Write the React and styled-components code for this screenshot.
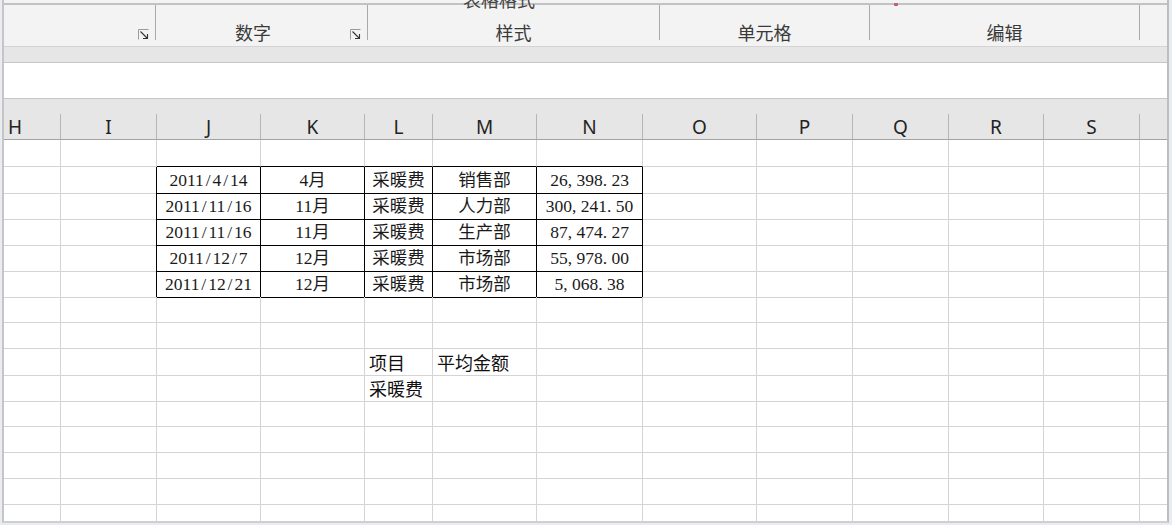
import React from "react";
import styled, { createGlobalStyle } from "styled-components";

const GlobalStyle = createGlobalStyle`
  html, body {
    margin: 0;
    padding: 0;
    background: #e9edf1;
  }
  * {
    box-sizing: border-box;
  }
`;

const COLS = "57px 96px 104px 104px 68px 104px 106px 114px 96px 96px 95px 96px 1fr";

const Page = styled.div`
  width: 1172px;
  height: 525px;
  overflow: hidden;
  background: #e9edf1;
`;

const Frame = styled.div`
  margin-left: 2px;
  width: 1167px;
  height: 523px;
  border-left: 2px solid #c6c6c6;
  border-right: 2px solid #bdbdbd;
  border-bottom: 2px solid #cfcfcf;
  background: #f3f3f3;
  padding-top: 3px;
  display: flex;
  flex-direction: column;
  overflow: hidden;
`;

const Ribbon = styled.div`
  height: 43px;
  border-top: 2px solid #c2c2c2;
  background: #f3f3f3;
  display: flex;
  position: relative;
`;

const Group = styled.div`
  position: relative;
  width: ${(p) => p.$w}px;
  flex: ${(p) => (p.$w ? "none" : "1")};
  height: 35px;
  padding-top: 17px;
  display: flex;
  justify-content: flex-end;
  align-items: flex-start;
  border-right: ${(p) => (p.$last ? "none" : "1px solid #a9a9a9")};
`;

const GroupLabel = styled.div`
  flex: 1;
  text-align: center;
  font-family: "Noto Sans CJK SC", sans-serif;
  font-size: 18px;
  line-height: 20px;
  color: #3a3a3a;
`;

const Launcher = styled.svg`
  width: 11px;
  height: 11px;
  margin: 7px 6px 0 0;
  flex: none;
`;

const ClippedTitle = styled.div`
  position: absolute;
  top: -16px;
  left: 95px;
  font-family: "Noto Sans CJK SC", sans-serif;
  font-size: 18px;
  line-height: 20px;
  color: #444;
`;

const Mark = styled.div`
  position: absolute;
  top: -2px;
  left: 24px;
  width: 4px;
  height: 3px;
  border-radius: 1px;
  background: #c35a78;
`;

const Band = styled.div`
  height: 17px;
  background: #e6e6e6;
  border-top: 1px solid #d4d4d4;
  border-bottom: 1px solid #c6c6c6;
`;

const FormulaArea = styled.div`
  height: 36px;
  background: #ffffff;
  border-bottom: 1px solid #c6c6c6;
`;

const HeaderRow = styled.div`
  height: 41px;
  padding-top: 15px;
  background: #e6e6e6;
  border-bottom: 1px solid #a3a3a3;
  display: grid;
  grid-template-columns: ${COLS};
`;

const HeaderCell = styled.div`
  height: 25px;
  border-right: ${(p) => (p.$last ? "none" : "1px solid #b5b5b5")};
  font-family: "Noto Sans", "Open Sans", sans-serif;
  font-size: 19px;
  line-height: 27px;
  color: #222;
  text-align: ${(p) => (p.$left ? "left" : "center")};
  padding-left: ${(p) => (p.$left ? "4px" : "0")};
`;

const Sheet = styled.div`
  flex: 1;
  background: #ffffff;
  overflow: hidden;
`;

const Row = styled.div`
  display: grid;
  grid-template-columns: ${COLS};
  height: ${(p) => p.$h}px;
`;

const Cell = styled.div`
  border-right: 1px solid ${(p) => (p.$right ? "#000" : "#d4d4d4")};
  border-bottom: 1px solid ${(p) => (p.$bottom ? "#000" : "#d4d4d4")};
  border-right-style: ${(p) => (p.$last ? "none" : "solid")};
  white-space: nowrap;
  overflow: visible;
  color: #1a1a1a;
  ${(p) =>
    p.$kind === "table"
      ? `
    font-family: "Liberation Serif", "Noto Sans CJK SC", serif;
    font-size: 17.5px;
    line-height: 26px;
    text-align: center;
  `
      : `
    font-family: "Noto Sans CJK SC", sans-serif;
    font-size: 18px;
    line-height: 26px;
    padding-left: 4px;
    color: #111;
  `}
`;

// half-width slot, like the fixed-width latin of a song-style font
const Slot = styled.span`
  display: inline-block;
  width: 0.5em;
  text-align: ${(p) => (p.$center ? "center" : "left")};
`;

const columns = ["H", "I", "J", "K", "L", "M", "N", "O", "P", "Q", "R", "S", ""];

const tableRows = [
  ["2011/4/14", "4月", "采暖费", "销售部", "26,398.23"],
  ["2011/11/16", "11月", "采暖费", "人力部", "300,241.50"],
  ["2011/11/16", "11月", "采暖费", "生产部", "87,474.27"],
  ["2011/12/7", "12月", "采暖费", "市场部", "55,978.00"],
  ["2011/12/21", "12月", "采暖费", "市场部", "5,068.38"],
];

const summary = {
  8: { 4: "项目", 5: "平均金额" },
  9: { 4: "采暖费" },
};

function LauncherIcon() {
  return (
    <Launcher viewBox="0 0 11 11">
      <path d="M0.5 10.5 V0.5 H10.5" fill="none" stroke="#9a9a9a" strokeWidth="1" />
      <path d="M2.5 2.5 L9.5 9.5" fill="none" stroke="#333" strokeWidth="1.1" />
      <path d="M9.5 5 V9.5 H5" fill="none" stroke="#333" strokeWidth="1.1" />
    </Launcher>
  );
}

function monoText(text) {
  return text.split("").map((ch, i) => {
    if (ch === "," || ch === ".") return <Slot key={i}>{ch}</Slot>;
    if (ch === "/") return <Slot key={i} $center>{ch}</Slot>;
    return ch;
  });
}

function cellProps(r, c) {
  // table occupies rows 1..5, cols 2..6 (J..N)
  const inTable = r >= 1 && r <= 5 && c >= 2 && c <= 6;
  let bottom = false;
  let right = false;
  if (inTable) {
    bottom = true;
    right = true;
  }
  if (r === 0 && c >= 2 && c <= 6) bottom = true;
  if (c === 1 && r >= 1 && r <= 5) right = true;
  let text = "";
  let kind = "text";
  if (inTable) {
    text = monoText(tableRows[r - 1][c - 2]);
    kind = "table";
  } else if (summary[r] && summary[r][c]) {
    text = summary[r][c];
  }
  return { bottom, right, text, kind };
}

export default function App() {
  const rows = Array.from({ length: 15 }, (_, i) => i);
  return (
    <Page>
      <GlobalStyle />
      <Frame>
        <Ribbon>
          <Group $w={152}>
            <LauncherIcon />
          </Group>
          <Group $w={212}>
            <GroupLabel>数字</GroupLabel>
            <LauncherIcon />
          </Group>
          <Group $w={292}>
            <ClippedTitle>表格格式</ClippedTitle>
            <GroupLabel>样式</GroupLabel>
          </Group>
          <Group $w={210}>
            <GroupLabel>单元格</GroupLabel>
          </Group>
          <Group $w={270}>
            <Mark />
            <GroupLabel>编辑</GroupLabel>
          </Group>
          <Group $last />
        </Ribbon>
        <Band />
        <FormulaArea />
        <HeaderRow>
          {columns.map((col, i) => (
            <HeaderCell key={i} $left={i === 0} $last={i === columns.length - 1}>
              {col}
            </HeaderCell>
          ))}
        </HeaderRow>
        <Sheet>
          {rows.map((r) => (
            <Row key={r} $h={r === 0 ? 27 : 26}>
              {columns.map((_, c) => {
                const p = cellProps(r, c);
                return (
                  <Cell
                    key={c}
                    $bottom={p.bottom}
                    $right={p.right}
                    $kind={p.kind}
                    $last={c === columns.length - 1}
                  >
                    {p.text}
                  </Cell>
                );
              })}
            </Row>
          ))}
        </Sheet>
      </Frame>
    </Page>
  );
}
